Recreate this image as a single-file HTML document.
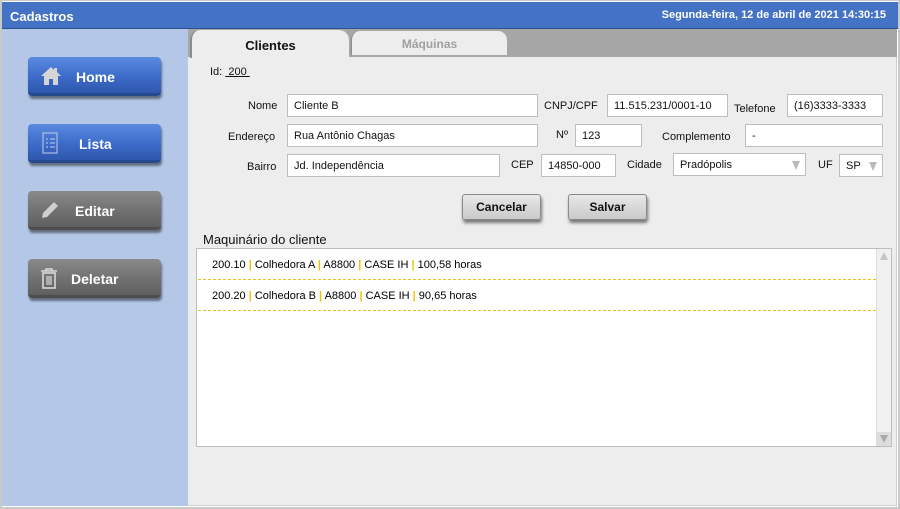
<!DOCTYPE html>
<html><head><meta charset="utf-8"><style>
*{box-sizing:border-box;margin:0;padding:0}
body{width:900px;height:509px;position:relative;background:#fff;font-family:"Liberation Sans",Arial,sans-serif;font-size:11px;color:#111;overflow:hidden}
.a{position:absolute}
.frame{left:0;top:0;width:900px;height:509px;border:2px solid #c9c9c9;border-top:1px solid #c9c9c9}
.hdr{left:2px;top:2px;width:896px;height:27px;background:#4472c4;border-bottom:1px solid #2f528f;color:#fff;font-weight:bold;font-size:13px}
.side{left:2px;top:29px;width:186px;height:477px;background:#b4c7e7}
.main{left:188px;top:29px;width:709px;height:477px;background:#ededed;border-right:1px solid #d0d0d0;border-bottom:1px solid #d0d0d0}
.strip{left:188px;top:29px;width:709px;height:28px;background:#a6a6a6}
.btn{width:133px;height:39px;border-radius:4px;color:#fff;font-weight:bold;font-size:14px;box-shadow:1px 3px 2px rgba(0,0,0,.45)}
.blue{background:linear-gradient(#5a8be0,#3d6bc9 55%,#2f58ad);border-bottom:3px solid #24498f}
.gray{background:linear-gradient(#8a8a8a,#717171 55%,#5f5f5f);border-bottom:3px solid #4d4d4d}
.btn span{position:absolute;top:12px}
.lbl{font-size:11px;color:#111}
.inp{background:#fff;border:1px solid #bdbdbd;height:23px;padding:5px 6px;font-size:11px}
.tri{position:absolute;right:5px;top:7px;width:0;height:0;border-left:4px solid transparent;border-right:4px solid transparent;border-top:9px solid #bbb}
.gb{width:79px;height:26px;border-radius:3px;background:linear-gradient(#e8e8e8,#c9c9c9);border:1px solid #8a8a8a;box-shadow:1px 3px 3px rgba(0,0,0,.5);text-align:center;line-height:24px;font-weight:bold;font-size:12px}
.y{color:#f5c000;font-weight:bold}
.row{left:1px;width:678px;height:31px;border-bottom:1px dashed #f0c020;padding:10px 0 0 14px;color:#000}
</style></head><body>
<div class="a frame"></div>
<div class="a hdr"><span class="a" style="left:8px;top:7px">Cadastros</span><span class="a" style="right:12px;top:7px;font-size:11px">Segunda-feira, 12 de abril de 2021 14:30:15</span></div>
<div class="a side"></div>
<div class="a main"></div>
<div class="a strip"></div>
<div class="a" style="left:190px;top:30px;width:159px;height:28px;background:#ededed;border-radius:10px 10px 0 0;border-left:2px solid #8c8c8c;text-align:center;padding-top:8px;font-weight:bold;font-size:13px">Clientes</div>
<div class="a" style="left:351px;top:31px;width:156px;height:24px;background:#ededed;border-radius:9px 9px 0 0;border-left:1px solid #8c8c8c;text-align:center;padding-top:6px;font-weight:bold;font-size:12px;color:#a0a0a0">Máquinas</div>

<div class="a btn blue" style="left:28px;top:57px"><svg class="a" style="left:12px;top:9px" width="22" height="20" viewBox="0 0 22 20"><path d="M11 1L1 10h3v9h5v-6h4v6h5v-9h3L17 6V2h-3v2z" fill="#d5d5d5"/></svg><span style="left:48px">Home</span></div>
<div class="a btn blue" style="left:28px;top:124px"><svg class="a" style="left:14px;top:8px" width="16" height="22" viewBox="0 0 16 22"><rect x="1" y="1" width="14" height="20" fill="none" stroke="#a9bde0" stroke-width="1.2"/><path d="M4 7h2M8 7h5M4 11h2M8 11h5M4 15h2M8 15h5" stroke="#a9bde0" stroke-width="1.2"/></svg><span style="left:51px">Lista</span></div>
<div class="a btn gray" style="left:28px;top:191px"><svg class="a" style="left:12px;top:9px" width="20" height="20" viewBox="0 0 20 20"><path d="M2 18l1-5L14 2l4 4L7 17z" fill="#cfcfcf"/></svg><span style="left:47px">Editar</span></div>
<div class="a btn gray" style="left:28px;top:259px"><svg class="a" style="left:12px;top:8px" width="18" height="22" viewBox="0 0 18 22"><path d="M1 4h16M6 4V2h6v2" stroke="#d8d8d8" stroke-width="1.6" fill="none"/><rect x="3" y="6" width="12" height="15" fill="none" stroke="#d8d8d8" stroke-width="1.6"/><path d="M7 9v9M9 9v9M11 9v9" stroke="#d8d8d8" stroke-width="1.2"/></svg><span style="left:43px">Deletar</span></div>

<div class="a lbl" style="left:210px;top:66px">Id: <u>&nbsp;200&nbsp;</u></div>

<div class="a lbl" style="left:248px;top:100px">Nome</div>
<div class="a inp" style="left:287px;top:94px;width:251px">Cliente B</div>
<div class="a lbl" style="left:544px;top:100px">CNPJ/CPF</div>
<div class="a inp" style="left:607px;top:94px;width:121px">11.515.231/0001-10</div>
<div class="a lbl" style="left:734px;top:103px">Telefone</div>
<div class="a inp" style="left:787px;top:94px;width:96px">(16)3333-3333</div>

<div class="a lbl" style="left:228px;top:131px">Endereço</div>
<div class="a inp" style="left:287px;top:124px;width:251px">Rua Antônio Chagas</div>
<div class="a lbl" style="left:556px;top:129px">Nº</div>
<div class="a inp" style="left:575px;top:124px;width:67px">123</div>
<div class="a lbl" style="left:662px;top:131px">Complemento</div>
<div class="a inp" style="left:745px;top:124px;width:138px">-</div>

<div class="a lbl" style="left:247px;top:161px">Bairro</div>
<div class="a inp" style="left:287px;top:154px;width:213px">Jd. Independência</div>
<div class="a lbl" style="left:511px;top:159px">CEP</div>
<div class="a inp" style="left:541px;top:154px;width:75px">14850-000</div>
<div class="a lbl" style="left:627px;top:159px">Cidade</div>
<div class="a inp" style="left:673px;top:153px;width:133px">Pradópolis<i class="tri"></i></div>
<div class="a lbl" style="left:818px;top:159px">UF</div>
<div class="a inp" style="left:839px;top:154px;width:44px">SP<i class="tri"></i></div>

<div class="a gb" style="left:462px;top:194px">Cancelar</div>
<div class="a gb" style="left:568px;top:194px">Salvar</div>

<div class="a" style="left:203px;top:232px;font-size:13px">Maquinário do cliente</div>
<div class="a" style="left:196px;top:248px;width:696px;height:199px;background:#fff;border:1px solid #bdbdbd">
<div class="a row" style="top:0">200.10 <span class="y">|</span> Colhedora A <span class="y">|</span> A8800 <span class="y">|</span> CASE IH <span class="y">|</span> 100,58 horas</div>
<div class="a row" style="top:31px">200.20 <span class="y">|</span> Colhedora B <span class="y">|</span> A8800 <span class="y">|</span> CASE IH <span class="y">|</span> 90,65 horas</div>
<div class="a" style="right:0;top:0;width:15px;height:197px;background:#f0f0f0;border-left:1px solid #ddd">
<div class="a" style="left:3px;top:3px;border-left:4px solid transparent;border-right:4px solid transparent;border-bottom:8px solid #c4c4c4"></div>
<div class="a" style="left:0;bottom:0;width:14px;height:14px;background:#ddd"></div>
<div class="a" style="left:3px;bottom:3px;border-left:4px solid transparent;border-right:4px solid transparent;border-top:8px solid #a9a9a9"></div>
</div>
</div>
</body></html>
